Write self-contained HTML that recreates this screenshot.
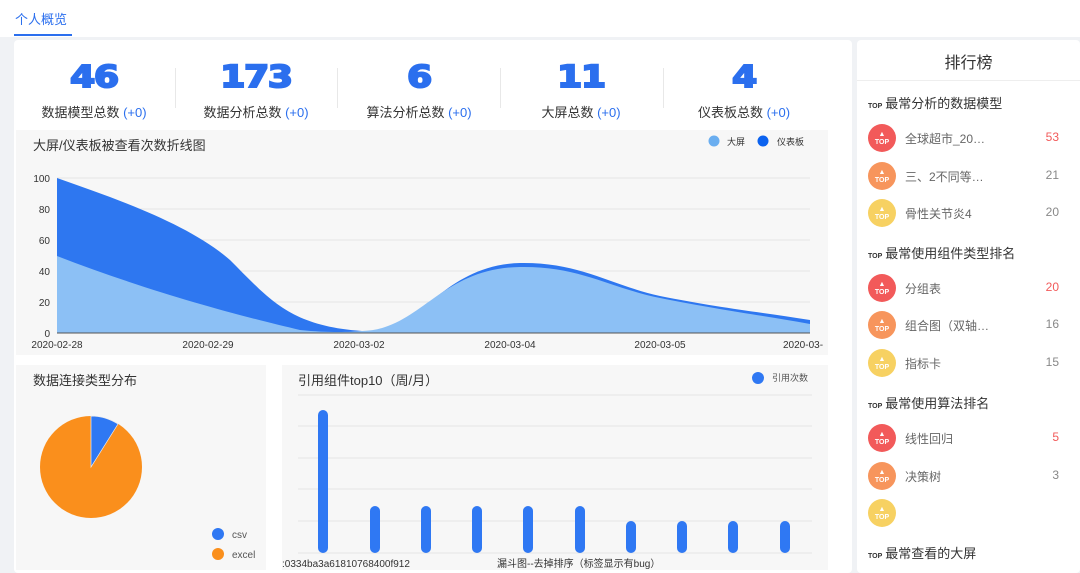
<!DOCTYPE html>
<html><head><meta charset="utf-8"><style>
*{margin:0;padding:0;box-sizing:border-box}
body{width:1080px;height:573px;overflow:hidden;background:#f0f2f5;font-family:"Liberation Sans","Noto Sans CJK SC",sans-serif;position:relative;color:#333}
.a{position:absolute}
.num{position:absolute;top:60px;width:160px;text-align:center;font-family:"DejaVu Sans",sans-serif;font-weight:bold;font-size:30px;color:#2b6fee;transform:scaleX(1.2);letter-spacing:-1px;-webkit-text-stroke:2px #2b6fee}
.lab{position:absolute;top:102px;width:160px;text-align:center;font-size:13px;color:#333}
.lab span{color:#2b6fee}
.div{position:absolute;top:68px;width:1px;height:40px;background:#e8e8e8}
.sec{position:absolute;left:868px;font-size:13px;color:#333}
.sec i{font-style:normal;font-size:7px;font-weight:bold;margin-right:3px;position:relative}
.it{position:absolute;left:868px;width:195px;height:28px}
.c{position:absolute;left:0;top:0;width:28px;height:28px;border-radius:50%;color:#fff;font-size:7px;text-align:center;line-height:8px;padding-top:7px;font-weight:bold}
.t{position:absolute;left:37px;top:6px;font-size:12px;color:#666}
.v{position:absolute;right:4px;top:6px;font-size:12px;color:#888}
</style></head><body>
<div class="a" style="left:0;top:0;width:1080px;height:37px;background:#fff"></div>
<div class="a" style="left:15px;top:9px;font-size:13px;color:#2b6fee">个人概览</div>
<div class="a" style="left:14px;top:34px;width:58px;height:2px;background:#2b6fee"></div>
<div class="a" style="left:14px;top:40px;width:838px;height:533px;background:#fff;border-radius:4px"></div>
<div class="a" style="left:857px;top:40px;width:223px;height:533px;background:#fff;border-radius:4px"></div>

<div class="num" style="left:14px">46</div><div class="lab" style="left:14px">数据模型总数 <span>(+0)</span></div>
<div class="num" style="left:176px">173</div><div class="lab" style="left:176px">数据分析总数 <span>(+0)</span></div>
<div class="num" style="left:339px">6</div><div class="lab" style="left:339px">算法分析总数 <span>(+0)</span></div>
<div class="num" style="left:501px">11</div><div class="lab" style="left:501px">大屏总数 <span>(+0)</span></div>
<div class="num" style="left:664px">4</div><div class="lab" style="left:664px">仪表板总数 <span>(+0)</span></div>
<div class="div" style="left:175px"></div><div class="div" style="left:337px"></div><div class="div" style="left:500px"></div><div class="div" style="left:663px"></div>

<div class="a" style="left:16px;top:130px;width:812px;height:225px;background:#f7f7f7"></div>
<div class="a" style="left:33px;top:135px;font-size:13px;color:#333">大屏/仪表板被查看次数折线图</div>
<svg class="a" style="left:0;top:0" width="852" height="573">
<g font-family="Liberation Sans" font-size="10" fill="#333">
<circle cx="714" cy="141" r="5.5" fill="#6aaef0"/><text x="727" y="145" font-size="9" font-family="Noto Sans CJK SC">大屏</text>
<circle cx="763" cy="141" r="5.5" fill="#0b62ef"/><text x="777" y="145" font-size="9" font-family="Noto Sans CJK SC">仪表板</text>
<g stroke="#e4e4e4"><line x1="57" y1="178" x2="810" y2="178"/><line x1="57" y1="209" x2="810" y2="209"/><line x1="57" y1="240" x2="810" y2="240"/><line x1="57" y1="271" x2="810" y2="271"/><line x1="57" y1="302" x2="810" y2="302"/></g>
<text x="50" y="182" text-anchor="end">100</text><text x="50" y="213" text-anchor="end">80</text><text x="50" y="244" text-anchor="end">60</text><text x="50" y="275" text-anchor="end">40</text><text x="50" y="306" text-anchor="end">20</text><text x="50" y="337" text-anchor="end">0</text>
<path d="M57,178 C120,200 190,225 230,260 C270,300 290,326 362,331 C420,336 440,265 520,263 C580,262 610,285 660,296 C720,308 760,312 810,320 L810,333 L57,333Z" fill="#2e77f0"/>
<path d="M57,256 C150,292 240,316 300,330 C330,333 350,332 362,331 C420,330 440,268 520,267 C580,266 610,288 660,298 C720,310 760,315 810,324 L810,333 L57,333Z" fill="#8cc0f5"/>
<line x1="57" y1="333" x2="810" y2="333" stroke="#555"/>
<text x="57" y="348" text-anchor="middle">2020-02-28</text><text x="208" y="348" text-anchor="middle">2020-02-29</text><text x="359" y="348" text-anchor="middle">2020-03-02</text><text x="510" y="348" text-anchor="middle">2020-03-04</text><text x="660" y="348" text-anchor="middle">2020-03-05</text><text x="783" y="348">2020-03-</text>
</g>
<rect x="16" y="365" width="250" height="205" fill="#f7f7f7"/>
<rect x="282" y="365" width="546" height="205" fill="#f7f7f7"/>
<circle cx="91" cy="467" r="51" fill="#fa8f1c"/>
<path d="M91,467 L91,416 A51,51 0 0 1 118,424 Z" fill="#2f78f3" stroke="#eee" stroke-width="0.7"/>
<circle cx="218" cy="534" r="6" fill="#2f78f3"/><circle cx="218" cy="554" r="6" fill="#fa8f1c"/>
<text x="232" y="538" font-size="10" fill="#555">csv</text><text x="232" y="558" font-size="10" fill="#555">excel</text>
<g stroke="#e6e6e6"><line x1="298" y1="395" x2="812" y2="395"/><line x1="298" y1="426" x2="812" y2="426"/><line x1="298" y1="458" x2="812" y2="458"/><line x1="298" y1="489" x2="812" y2="489"/><line x1="298" y1="521" x2="812" y2="521"/><line x1="298" y1="553" x2="812" y2="553"/></g>
<g fill="#2f78f3">
<rect x="318" y="410" width="10" height="143" rx="5"/>
<rect x="370" y="506" width="10" height="47" rx="5"/><rect x="421" y="506" width="10" height="47" rx="5"/><rect x="472" y="506" width="10" height="47" rx="5"/><rect x="523" y="506" width="10" height="47" rx="5"/><rect x="575" y="506" width="10" height="47" rx="5"/>
<rect x="626" y="521" width="10" height="32" rx="5"/><rect x="677" y="521" width="10" height="32" rx="5"/><rect x="728" y="521" width="10" height="32" rx="5"/><rect x="780" y="521" width="10" height="32" rx="5"/>
<circle cx="758" cy="378" r="6"/></g>
<text x="772" y="381" font-size="9" fill="#555" font-family="Noto Sans CJK SC">引用次数</text>
<text x="282" y="567" font-size="10" fill="#333">:0334ba3a61810768400f912</text>
<text x="497" y="567" font-size="10" fill="#333" font-family="Liberation Sans,Noto Sans CJK SC">漏斗图--去掉排序（标签显示有bug）</text>
</svg>
<div class="a" style="left:33px;top:370px;font-size:13px;color:#333">数据连接类型分布</div>
<div class="a" style="left:298px;top:370px;font-size:13px;color:#333">引用组件top10（周/月）</div>

<div class="a" style="left:857px;top:49px;width:223px;text-align:center;font-size:16px;color:#333">排行榜</div>
<div class="a" style="left:857px;top:80px;width:223px;height:1px;background:#eee"></div>

<div class="sec" style="top:93px"><i>TOP</i>最常分析的数据模型</div>
<div class="it" style="top:124px"><div class="c" style="background:#f25a5a">▲<br>TOP</div><div class="t">全球超市_20…</div><div class="v" style="color:#f25a5a">53</div></div>
<div class="it" style="top:162px"><div class="c" style="background:#f7955c">▲<br>TOP</div><div class="t">三、2不同等…</div><div class="v">21</div></div>
<div class="it" style="top:199px"><div class="c" style="background:#f7d162">▲<br>TOP</div><div class="t">骨性关节炎4</div><div class="v">20</div></div>
<div class="sec" style="top:243px"><i>TOP</i>最常使用组件类型排名</div>
<div class="it" style="top:274px"><div class="c" style="background:#f25a5a">▲<br>TOP</div><div class="t">分组表</div><div class="v" style="color:#f25a5a">20</div></div>
<div class="it" style="top:311px"><div class="c" style="background:#f7955c">▲<br>TOP</div><div class="t">组合图（双轴…</div><div class="v">16</div></div>
<div class="it" style="top:349px"><div class="c" style="background:#f7d162">▲<br>TOP</div><div class="t">指标卡</div><div class="v">15</div></div>
<div class="sec" style="top:393px"><i>TOP</i>最常使用算法排名</div>
<div class="it" style="top:424px"><div class="c" style="background:#f25a5a">▲<br>TOP</div><div class="t">线性回归</div><div class="v" style="color:#f25a5a">5</div></div>
<div class="it" style="top:462px"><div class="c" style="background:#f7955c">▲<br>TOP</div><div class="t">决策树</div><div class="v">3</div></div>
<div class="it" style="top:499px"><div class="c" style="background:#f7d162">▲<br>TOP</div></div>
<div class="sec" style="top:543px"><i>TOP</i>最常查看的大屏</div>
</body></html>
